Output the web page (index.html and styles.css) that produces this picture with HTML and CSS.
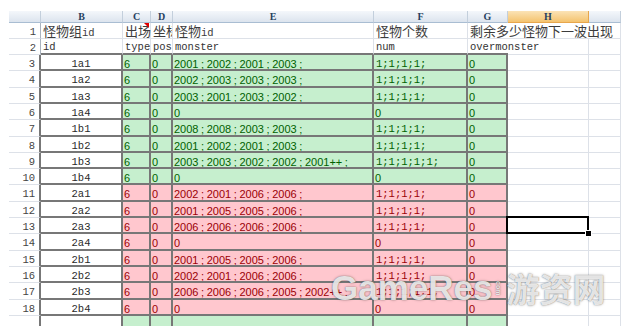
FILE: index.html
```html
<!DOCTYPE html>
<html lang="zh">
<head>
<meta charset="utf-8">
<title>怪物组</title>
<link rel="stylesheet" href="styles.css">
</head>
<body>
<div class="sheet">
  <div class="h"></div><div class="h">B</div><div class="h">C</div><div class="h">D</div><div class="h">E</div><div class="h">F</div><div class="h">G</div><div class="h sel">H</div><div class="h"></div>

  <div class="c rn">1</div><div class="c t1 ov1"><span class="cj">怪物组</span>id</div><div class="c t1 ov1 note"><span class="cj">出场</span></div><div class="c t1"><span class="cj">坐标</span></div><div class="c t1 ov1"><span class="cj">怪物</span>id</div><div class="c t1 ov1"><span class="cj">怪物个数</span></div><div class="c t1 ov"><span class="cj">剩余多少怪物下一波出现</span></div><div class="c nr"></div><div class="c"></div>

  <div class="c rn">2</div><div class="c top">id</div><div class="c top">type</div><div class="c top">pos</div><div class="c top">monster</div><div class="c top">num</div><div class="c top ov">overmonster</div><div class="c"></div><div class="c"></div>

  <div class="c rn dk">3</div><div class="c d b">1a1</div><div class="c d g s">6</div><div class="c d g s">0</div><div class="c d g s">2001<i>;</i>2002<i>;</i>2001<i>;</i>2003<i>;</i></div><div class="c d g">1;1;1;1;</div><div class="c d g s">0</div><div class="c"></div><div class="c"></div>

  <div class="c rn dk">4</div><div class="c d b">1a2</div><div class="c d g s">6</div><div class="c d g s">0</div><div class="c d g s">2002<i>;</i>2003<i>;</i>2003<i>;</i>2003<i>;</i></div><div class="c d g">1;1;1;1;</div><div class="c d g s">0</div><div class="c"></div><div class="c"></div>

  <div class="c rn dk">5</div><div class="c d b">1a3</div><div class="c d g s">6</div><div class="c d g s">0</div><div class="c d g s">2003<i>;</i>2001<i>;</i>2003<i>;</i>2002<i>;</i></div><div class="c d g">1;1;1;1;</div><div class="c d g s">0</div><div class="c"></div><div class="c"></div>

  <div class="c rn dk">6</div><div class="c d b">1a4</div><div class="c d g s">6</div><div class="c d g s">0</div><div class="c d g s">0</div><div class="c d g s">0</div><div class="c d g s">0</div><div class="c"></div><div class="c"></div>

  <div class="c rn dk">7</div><div class="c d b">1b1</div><div class="c d g s">6</div><div class="c d g s">0</div><div class="c d g s">2008<i>;</i>2008<i>;</i>2003<i>;</i>2003<i>;</i></div><div class="c d g">1;1;1;1;</div><div class="c d g s">0</div><div class="c"></div><div class="c"></div>

  <div class="c rn dk">8</div><div class="c d b">1b2</div><div class="c d g s">6</div><div class="c d g s">0</div><div class="c d g s">2001<i>;</i>2002<i>;</i>2001<i>;</i>2003<i>;</i></div><div class="c d g">1;1;1;1;</div><div class="c d g s">0</div><div class="c"></div><div class="c"></div>

  <div class="c rn dk">9</div><div class="c d b">1b3</div><div class="c d g s">6</div><div class="c d g s">0</div><div class="c d g s">2003<i>;</i>2003<i>;</i>2002<i>;</i>2002<i>;</i>2001++<i>;</i></div><div class="c d g">1;1;1;1;1;</div><div class="c d g s">0</div><div class="c"></div><div class="c"></div>

  <div class="c rn dk">10</div><div class="c d b">1b4</div><div class="c d g s">6</div><div class="c d g s">0</div><div class="c d g s">0</div><div class="c d g s">0</div><div class="c d g s">0</div><div class="c"></div><div class="c"></div>

  <div class="c rn dk">11</div><div class="c d b">2a1</div><div class="c d r s">6</div><div class="c d r s">0</div><div class="c d r s">2002<i>;</i>2001<i>;</i>2006<i>;</i>2006<i>;</i></div><div class="c d r">1;1;1;1;</div><div class="c d r s">0</div><div class="c"></div><div class="c"></div>

  <div class="c rn dk">12</div><div class="c d b">2a2</div><div class="c d r s">6</div><div class="c d r s">0</div><div class="c d r s">2001<i>;</i>2005<i>;</i>2005<i>;</i>2006<i>;</i></div><div class="c d r">1;1;1;1;</div><div class="c d r s">0</div><div class="c"></div><div class="c"></div>

  <div class="c rn dk">13</div><div class="c d b">2a3</div><div class="c d r s">6</div><div class="c d r s">0</div><div class="c d r s">2006<i>;</i>2006<i>;</i>2006<i>;</i>2006<i>;</i></div><div class="c d r">1;1;1;1;</div><div class="c d r s">0</div><div class="c selc"></div><div class="c"></div>

  <div class="c rn dk">14</div><div class="c d b">2a4</div><div class="c d r s">6</div><div class="c d r s">0</div><div class="c d r s">0</div><div class="c d r s">0</div><div class="c d r s">0</div><div class="c"></div><div class="c"></div>

  <div class="c rn dk">15</div><div class="c d b">2b1</div><div class="c d r s">6</div><div class="c d r s">0</div><div class="c d r s">2001<i>;</i>2005<i>;</i>2005<i>;</i>2006<i>;</i></div><div class="c d r">1;1;1;1;</div><div class="c d r s">0</div><div class="c"></div><div class="c"></div>

  <div class="c rn dk">16</div><div class="c d b">2b2</div><div class="c d r s">6</div><div class="c d r s">0</div><div class="c d r s">2002<i>;</i>2001<i>;</i>2006<i>;</i>2006<i>;</i></div><div class="c d r">1;1;1;1;</div><div class="c d r s">0</div><div class="c"></div><div class="c"></div>

  <div class="c rn dk">17</div><div class="c d b">2b3</div><div class="c d r s">6</div><div class="c d r s">0</div><div class="c d r s">2006<i>;</i>2006<i>;</i>2006<i>;</i>2005<i>;</i>2002++<i>;</i></div><div class="c d r">1;1;1;1;1;</div><div class="c d r s">0</div><div class="c"></div><div class="c"></div>

  <div class="c rn dk">18</div><div class="c d b">2b4</div><div class="c d r s">6</div><div class="c d r s">0</div><div class="c d r s">0</div><div class="c d r s">0</div><div class="c d r s">0</div><div class="c"></div><div class="c"></div>

  <div class="c rn dk"></div><div class="c d b"></div><div class="c d g"></div><div class="c d g"></div><div class="c d g"></div><div class="c d g"></div><div class="c d g"></div><div class="c"></div><div class="c"></div>
</div>

<div class="wm"><span class="en">GameRes</span><span class="com">com</span><span class="zh">游资网</span></div>
</body>
</html>
```

FILE: styles.css
```css
html, body {
  margin: 0;
  padding: 0;
  background: #fff;
  overflow: hidden;
}
body {
  width: 634px;
  height: 326px;
  position: relative;
  font-family: "Liberation Mono", monospace;
}

.sheet {
  display: grid;
  grid-template-columns: 32px 82px 28px 22px 201px 94px 40px 81px 32px;
  grid-template-rows: 11.5px repeat(19, 16.31px);
  width: 612px;
  margin: 11px 0 0 9px;
}

.h {
  box-sizing: border-box;
  background: linear-gradient(#f4f7fb, #dce4ee);
  border-right: 1px solid #c3cfdc;
  border-bottom: 1px solid #a9bdd2;
  font: bold 10px/11px "Liberation Serif", serif;
  color: #26405f;
  text-align: center;
  overflow: hidden;
}
.h.sel {
  background: linear-gradient(#fbe3b6, #f4c36f);
  border-right-color: #e7a64c;
  border-bottom-color: #e7a64c;
}

.c {
  box-sizing: border-box;
  border-right: 1px solid #dde1e8;
  border-bottom: 1px solid #dde1e8;
  overflow: hidden;
  white-space: nowrap;
  padding-left: 2px;
  font: 10.5px/16px "Liberation Mono", monospace;
  color: #333;
}

.t1 {
  line-height: 16px;
  padding-top: 1px;
  color: #3c3c3c;
}
.ov1 {
  overflow: visible;
}
.cj {
  font-family: "Noto Sans CJK SC", sans-serif;
  font-size: 13px;
  line-height: 13px;
}

.rn {
  text-align: right;
  padding: 1px 4px 0 0;
  color: #444;
  border-right-color: #aab3be;
}
.rn.dk {
  border-right: 2px solid #777;
}

.top {
  border-bottom: 2px solid #777;
}

.d {
  border-right: 2px solid #777;
  border-bottom: 2px solid #777;
  padding-top: 1px;
}
.b {
  text-align: center;
  padding-left: 0;
  color: #2a2a2a;
  background: #fff;
}
.g {
  background: #c6efce;
  color: #006100;
}
.r {
  background: #ffc7ce;
  color: #9c0006;
}
.s {
  font-family: "Liberation Sans", Arial, sans-serif;
  font-size: 11px;
  padding-left: 1px;
}
.s i {
  font-style: normal;
  padding: 0 2.6px;
}

.ov {
  overflow: visible;
  border-right: 0;
}
.nr {
  border-right: 0;
}

.note {
  position: relative;
}
.note::after {
  content: "";
  position: absolute;
  right: 1px;
  top: 0;
  border-top: 5px solid #e00000;
  border-left: 5px solid transparent;
}

.selc {
  position: relative;
  overflow: visible;
  z-index: 2;
}
.selc::before {
  content: "";
  position: absolute;
  left: -2px;
  top: -2px;
  right: -1px;
  bottom: -1px;
  border: 2px solid #000;
}
.selc::after {
  content: "";
  position: absolute;
  right: -4px;
  bottom: -4px;
  width: 5px;
  height: 5px;
  background: #000;
  border: 1px solid #fff;
}

.wm {
  position: absolute;
  left: 331px;
  top: 268px;
  display: flex;
  align-items: center;
  color: rgba(255, 255, 255, 0.82);
  text-shadow: 0 0 1px rgba(70, 70, 70, 0.7), 0 0 3px rgba(0, 0, 0, 0.25);
  white-space: nowrap;
}
.wm .en {
  font: bold 35px/40px "Liberation Sans", Arial, sans-serif;
}
.wm .com {
  font: bold 7px/8px "Liberation Sans", Arial, sans-serif;
  writing-mode: vertical-rl;
  margin: 0 4px 0 2px;
}
.wm .zh {
  font: bold 33px/40px "Noto Sans CJK SC", sans-serif;
}
```
